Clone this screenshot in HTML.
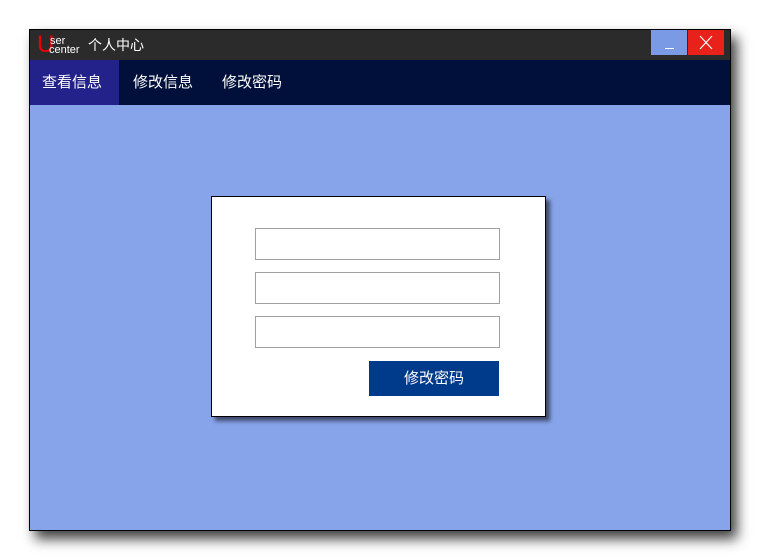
<!DOCTYPE html>
<html><head><meta charset="utf-8"><style>
*{margin:0;padding:0;box-sizing:border-box}
body{width:760px;height:560px;background:#fff;position:relative;overflow:hidden;font-family:"Liberation Sans","Noto Sans CJK SC",sans-serif}
.win{position:absolute;left:29px;top:29px;width:702px;height:502px;border:1px solid #000;background:#87a3ea;box-shadow:6px 8px 12px rgba(0,0,0,.75)}
.title{position:absolute;left:0;top:0;width:700px;height:30px;background:#2b2b2b}
.logo{position:absolute;left:7px;top:3px;width:46px;height:24px}
.logo .u{position:absolute;left:0;top:0;color:#e00;font-size:24px;line-height:24px}
.logo .s{position:absolute;left:13px;top:3px;color:#fff;font-size:11px;line-height:10px}
.logo .c{position:absolute;left:12px;top:12px;color:#fff;font-size:11px;line-height:10px}
.tt{position:absolute;left:58px;top:6px;color:#fff;font-size:14px;line-height:18px}
.min{position:absolute;left:621px;top:0;width:36px;height:25px;background:#7b9ae6}
.min:after{content:"";position:absolute;left:14px;top:18px;width:9px;height:1px;background:#fff}
.cls{position:absolute;left:658px;top:0;width:36px;height:25px;background:#e8211b}
.nav{position:absolute;left:0;top:30px;width:700px;height:45px;background:#00103a}
.nav div{position:absolute;top:0;height:45px;line-height:45px;color:#fff;font-size:15px}
.card{position:absolute;left:181px;top:166px;width:335px;height:221px;background:#fff;border:1px solid #000;box-shadow:4px 4px 4px rgba(0,0,0,.55)}
.in{position:absolute;left:43px;width:245px;height:32px;border:1px solid #a0a0a0}
.btn{position:absolute;left:157px;top:164px;width:130px;height:35px;background:#003a8a;color:#fff;font-size:15px;text-align:center;line-height:35px}
</style></head><body>
<div class="win">
 <div class="title">
  <div class="logo"><span class="u">U</span><span class="s">ser</span><span class="c">center</span></div>
  <div class="tt">个人中心</div>
  <div class="min"></div>
  <div class="cls"><svg width="36" height="25"><path d="M12 6L24 19M24 6L12 19" stroke="#fff" stroke-width="1.2" fill="none"/></svg></div>
 </div>
 <div class="nav">
  <div style="left:0;width:89px;background:#22228a;padding-left:12px">查看信息</div>
  <div style="left:103px">修改信息</div>
  <div style="left:192px">修改密码</div>
 </div>
 <div class="card">
  <div class="in" style="top:31px"></div>
  <div class="in" style="top:75px"></div>
  <div class="in" style="top:119px"></div>
  <div class="btn">修改密码</div>
 </div>
</div>
</body></html>
